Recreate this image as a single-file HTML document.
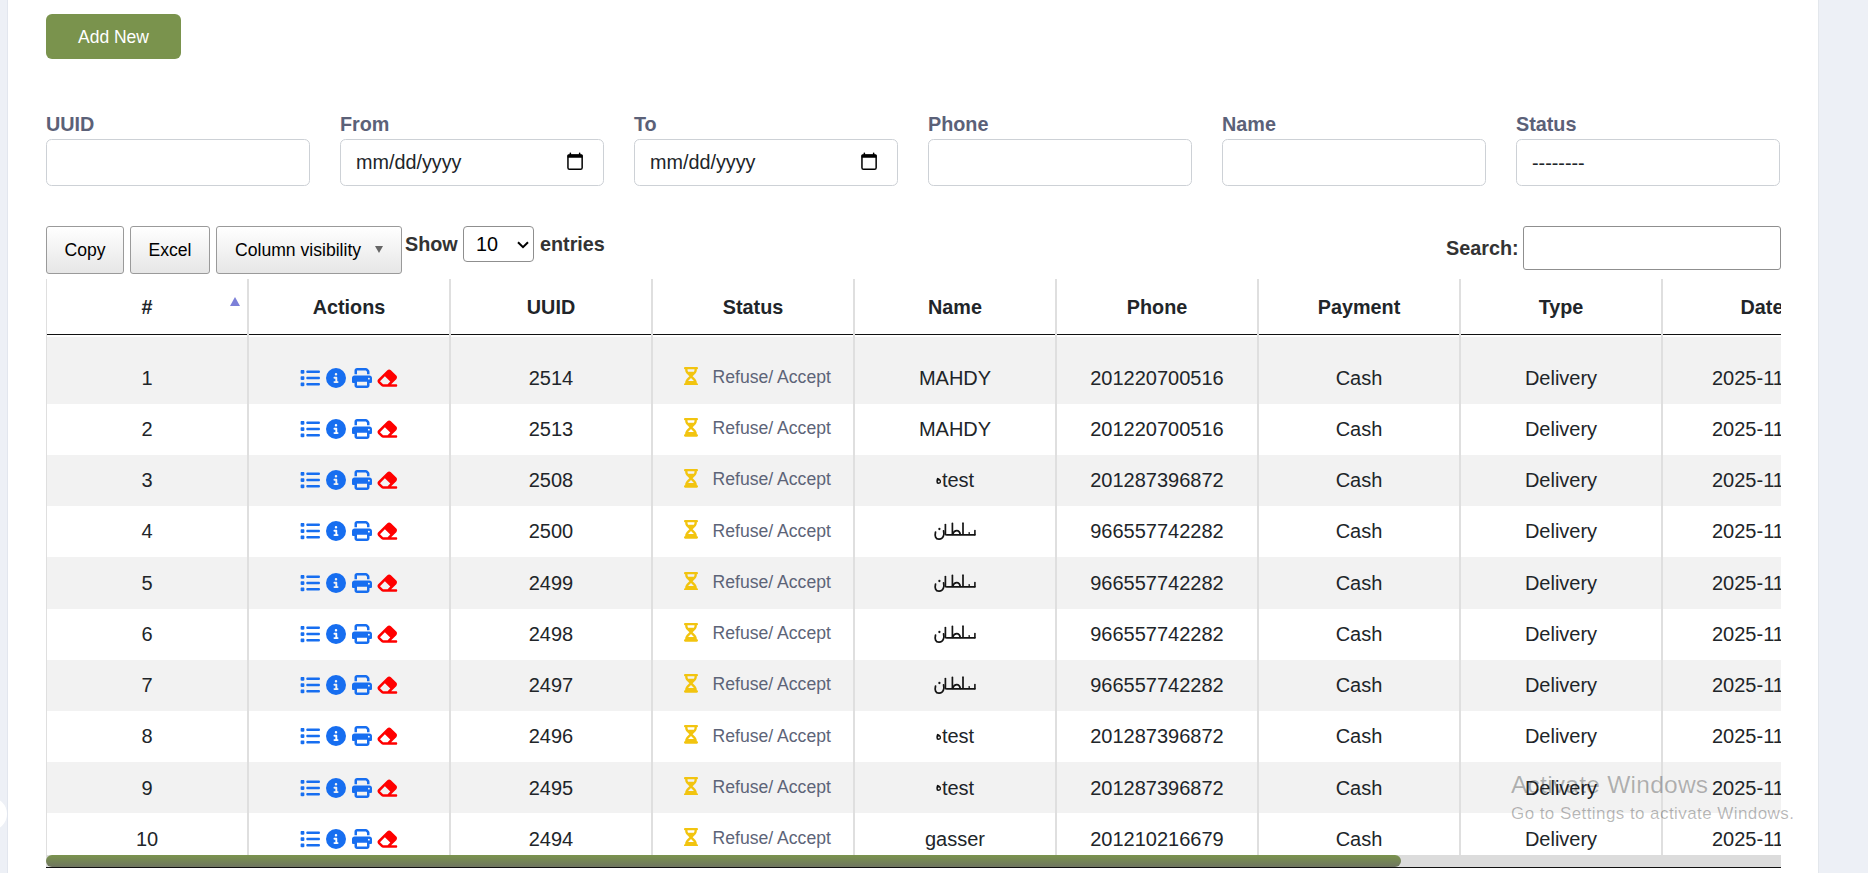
<!DOCTYPE html>
<html><head><meta charset="utf-8"><style>
*{box-sizing:border-box;margin:0;padding:0}
html,body{width:1868px;height:873px;overflow:hidden;background:#fff;font-family:"Liberation Sans",sans-serif;color:#212529}
.a{position:absolute}
.lstrip{position:absolute;left:0;top:0;width:8px;height:873px;background:#edf0f6;border-right:1px solid #e2e6ee}
.blob{position:absolute;left:-28px;top:797px;width:35px;height:34px;border-radius:50%;background:#fff}
.rstrip{position:absolute;left:1818px;top:0;width:50px;height:873px;background:#edf0f6;border-left:1px solid #e3e7ec}
.btn-add{position:absolute;left:46px;top:14px;width:135px;height:45px;background:#7a934d;border-radius:6px;color:#fff;font-size:17.5px;line-height:46.6px;text-align:center}
.lbl{position:absolute;top:112px;font-size:19.8px;font-weight:bold;color:#5b6178;line-height:24px}
.inp{position:absolute;top:139px;width:264px;height:47px;border:1px solid #cdd1d6;border-radius:5.5px;background:#fff}
.inp .t{position:absolute;left:15px;top:10px;font-size:19.8px;line-height:24px;color:#212529}
.cal{position:absolute;left:226px;top:12px}
.dbtn{position:absolute;top:226px;height:48px;border:1px solid #9a9a9a;border-radius:3px;background:linear-gradient(#ffffff,#e6e6e6);font-size:17.6px;line-height:46px;color:#000;text-align:center}
.bold{font-weight:bold;color:#333;font-size:19.8px;line-height:24px}
.sel{position:absolute;left:463px;top:226px;width:71px;height:36px;border:1px solid #8f8f8f;border-radius:4px;background:#fff}
.srch{position:absolute;left:1523px;top:226px;width:258px;height:44px;border:1px solid #8f8f8f;border-radius:3px;background:#fff}
.clip{position:absolute;left:46px;top:279px;width:1735px;height:594px;overflow:hidden}
.th{position:absolute;top:0;height:55px;width:202px;text-align:center;font-weight:bold;font-size:19.8px;line-height:56px;color:#212529}
.vl{position:absolute;top:0;width:2px;height:576px;background:#dfdfdf}
.row{position:absolute;left:0;width:1900px}
.g{background:#f2f2f2}
.td{position:absolute;width:202px;text-align:center;font-size:20px;line-height:24px;color:#212529;white-space:nowrap}
.st{position:absolute;font-size:17.6px;line-height:20px;color:#5d6478;white-space:nowrap}
.icons{position:absolute;height:20px}
.icons svg{position:absolute;top:0}
.wm1{position:absolute;left:1511px;top:770.5px;font-size:24.5px;line-height:normal;color:rgba(0,0,0,.28);white-space:nowrap;letter-spacing:0.25px}
.wm2{position:absolute;left:1511px;top:803.8px;font-size:17px;line-height:normal;color:rgba(0,0,0,.28);white-space:nowrap;letter-spacing:0.43px}
</style></head><body>
<div class="lstrip"></div><div class="blob"></div><div class="rstrip"></div>
<div class="btn-add">Add New</div>
<div class="lbl" style="left:46px">UUID</div>
<div class="lbl" style="left:340px">From</div>
<div class="lbl" style="left:634px">To</div>
<div class="lbl" style="left:928px">Phone</div>
<div class="lbl" style="left:1222px">Name</div>
<div class="lbl" style="left:1516px">Status</div>
<div class="inp" style="left:46px"></div>
<div class="inp" style="left:340px"><span class="t">mm/dd/yyyy</span><svg class="cal" width="17" height="19" viewBox="0 0 17 19"><rect x="2.6" y="0.4" width="1.5" height="3" rx="0.7" fill="#000"/><rect x="11.9" y="0.4" width="1.5" height="3" rx="0.7" fill="#000"/><rect x="0.95" y="3.05" width="14.2" height="14.3" rx="1.6" fill="none" stroke="#000" stroke-width="1.5"/><rect x="0.4" y="2.4" width="15.3" height="3.4" rx="1" fill="#000"/></svg></div>
<div class="inp" style="left:634px"><span class="t">mm/dd/yyyy</span><svg class="cal" width="17" height="19" viewBox="0 0 17 19"><rect x="2.6" y="0.4" width="1.5" height="3" rx="0.7" fill="#000"/><rect x="11.9" y="0.4" width="1.5" height="3" rx="0.7" fill="#000"/><rect x="0.95" y="3.05" width="14.2" height="14.3" rx="1.6" fill="none" stroke="#000" stroke-width="1.5"/><rect x="0.4" y="2.4" width="15.3" height="3.4" rx="1" fill="#000"/></svg></div>
<div class="inp" style="left:928px"></div>
<div class="inp" style="left:1222px"></div>
<div class="inp" style="left:1516px"><span class="t" style="top:11px">--------</span></div>
<div class="dbtn" style="left:46px;width:78px">Copy</div>
<div class="dbtn" style="left:130px;width:80px">Excel</div>
<div class="dbtn" style="left:216px;width:186px;text-align:left;padding-left:18px">Column visibility<svg class="a" style="left:158px;top:19px" width="8" height="7" viewBox="0 0 8 7"><path d="M0 0H8L4 7z" fill="#666"/></svg></div>
<div class="a bold" style="left:405px;top:232px">Show</div>
<div class="sel"><span class="a" style="left:12px;top:5px;font-size:19.8px;line-height:24px;color:#000">10</span><svg class="a" style="left:53px;top:14px" width="12" height="8" viewBox="0 0 12 8"><path d="M1 1.2L6 6.2 11 1.2" fill="none" stroke="#000" stroke-width="2"/></svg></div>
<div class="a bold" style="left:540px;top:232px">entries</div>
<div class="a bold" style="left:1446px;top:236px">Search:</div>
<div class="srch"></div>
<div class="clip">
<div class="row g" style="top:58.00px;height:66.70px"></div>
<div class="row" style="top:124.70px;height:51.22px"></div>
<div class="row g" style="top:175.92px;height:51.22px"></div>
<div class="row" style="top:227.14px;height:51.22px"></div>
<div class="row g" style="top:278.36px;height:51.22px"></div>
<div class="row" style="top:329.58px;height:51.22px"></div>
<div class="row g" style="top:380.80px;height:51.22px"></div>
<div class="row" style="top:432.02px;height:51.22px"></div>
<div class="row g" style="top:483.24px;height:51.22px"></div>
<div class="row" style="top:534.46px;height:51.22px"></div>
<div class="td" style="left:0;top:86.78px">1</div>
<div class="icons" style="left:254px;top:88.78px"><span class="a" style="left:0"><svg width="20" height="20" viewBox="0 0 512 512"><path fill="#176ef0" d="M40 48C26.7 48 16 58.7 16 72v48c0 13.3 10.7 24 24 24H88c13.3 0 24-10.7 24-24V72c0-13.3-10.7-24-24-24H40zM192 64c-17.7 0-32 14.3-32 32s14.3 32 32 32H480c17.7 0 32-14.3 32-32s-14.3-32-32-32H192zm0 160c-17.7 0-32 14.3-32 32s14.3 32 32 32H480c17.7 0 32-14.3 32-32s-14.3-32-32-32H192zm0 160c-17.7 0-32 14.3-32 32s14.3 32 32 32H480c17.7 0 32-14.3 32-32s-14.3-32-32-32H192zM16 232v48c0 13.3 10.7 24 24 24H88c13.3 0 24-10.7 24-24V232c0-13.3-10.7-24-24-24H40c-13.3 0-24 10.7-24 24zM40 368c-13.3 0-24 10.7-24 24v48c0 13.3 10.7 24 24 24H88c13.3 0 24-10.7 24-24V392c0-13.3-10.7-24-24-24H40z"/></svg></span><span class="a" style="left:26px"><svg width="20" height="20" viewBox="0 0 512 512"><path fill="#176ef0" d="M256 512A256 256 0 1 0 256 0a256 256 0 1 0 0 512zM216 336h24V272H216c-13.3 0-24-10.7-24-24s10.7-24 24-24h48c13.3 0 24 10.7 24 24v88h8c13.3 0 24 10.7 24 24s-10.7 24-24 24H216c-13.3 0-24-10.7-24-24s10.7-24 24-24zm40-208a32 32 0 1 1 0 64 32 32 0 1 1 0-64z"/></svg></span><span class="a" style="left:51.5px"><svg width="20" height="20" viewBox="0 0 512 512"><path fill="#176ef0" d="M128 0C92.7 0 64 28.7 64 64v96h64V64H354.7L384 93.3V160h64V93.3c0-17-6.7-33.3-18.7-45.3L400 18.7C388 6.700 371.7 0 354.7 0H128zM384 352v32 64H128V384 368 352H384zm64 32h32c17.7 0 32-14.3 32-32V256c0-35.3-28.7-64-64-64H64c-35.3 0-64 28.7-64 64v96c0 17.7 14.3 32 32 32H64v64c0 35.3 28.7 64 64 64H384c35.3 0 64-28.7 64-64V384zM432 248a24 24 0 1 1 0 48 24 24 0 1 1 0-48z"/></svg></span><span class="a" style="left:75.5px"><svg width="22.5" height="20" viewBox="0 0 576 512"><path fill="#ff0000" d="M290.7 57.4L57.4 290.7c-25 25-25 65.5 0 90.5l80 80c12 12 28.3 18.7 45.3 18.7H288h9.4H512c17.7 0 32-14.3 32-32s-14.3-32-32-32H387.9L518.6 285.3c25-25 25-65.5 0-90.5L381.3 57.4c-25-25-65.5-25-90.5 0zM297.4 416H288l-105.4 0-80-80L227.3 211.3 364.7 348.7 297.4 416z"/></svg></span></div>
<div class="td" style="left:404px;top:86.78px">2514</div>
<div class="a" style="left:638px;top:87.78px"><svg width="14" height="18.7" viewBox="0 0 384 512"><path fill="#f2c40f" d="M32 0C14.3 0 0 14.3 0 32S14.3 64 32 64V75c0 42.4 16.9 83.1 46.9 113.1L146.7 256 78.9 323.9C48.9 353.9 32 394.6 32 437v11c-17.7 0-32 14.3-32 32s14.3 32 32 32H64 320h32c17.7 0 32-14.300 32-32s-14.3-32-32-32V437c0-42.4-16.9-83.1-46.9-113.1L237.3 256l67.9-67.9c30-30 46.9-70.7 46.9-113.1V64c17.7 0 32-14.3 32-32s-14.3-32-32-32H320 64 32zM96 75V64H288V75c0 19-5.6 37.4-16 53H112c-10.3-15.6-16-34-16-53zm16 309c3.5-5.3 7.6-10.3 12.1-14.9L192 301.3l67.9 67.9c4.6 4.6 8.6 9.6 12.1 14.9H112z"/></svg></div>
<div class="st" style="left:666.5px;top:87.98px">Refuse/ Accept</div>
<div class="td" style="left:808px;top:86.78px">MAHDY</div>
<div class="td" style="left:1010px;top:86.78px">201220700516</div>
<div class="td" style="left:1212px;top:86.78px">Cash</div>
<div class="td" style="left:1414px;top:86.78px">Delivery</div>
<div class="td" style="left:1666px;top:86.78px;text-align:left">2025-11-10 12:00</div>
<div class="td" style="left:0;top:138.00px">2</div>
<div class="icons" style="left:254px;top:140.00px"><span class="a" style="left:0"><svg width="20" height="20" viewBox="0 0 512 512"><path fill="#176ef0" d="M40 48C26.7 48 16 58.7 16 72v48c0 13.3 10.7 24 24 24H88c13.3 0 24-10.7 24-24V72c0-13.3-10.7-24-24-24H40zM192 64c-17.7 0-32 14.3-32 32s14.3 32 32 32H480c17.7 0 32-14.3 32-32s-14.3-32-32-32H192zm0 160c-17.7 0-32 14.3-32 32s14.3 32 32 32H480c17.7 0 32-14.3 32-32s-14.3-32-32-32H192zm0 160c-17.7 0-32 14.3-32 32s14.3 32 32 32H480c17.7 0 32-14.3 32-32s-14.3-32-32-32H192zM16 232v48c0 13.3 10.7 24 24 24H88c13.3 0 24-10.7 24-24V232c0-13.3-10.7-24-24-24H40c-13.3 0-24 10.7-24 24zM40 368c-13.3 0-24 10.7-24 24v48c0 13.3 10.7 24 24 24H88c13.3 0 24-10.7 24-24V392c0-13.3-10.7-24-24-24H40z"/></svg></span><span class="a" style="left:26px"><svg width="20" height="20" viewBox="0 0 512 512"><path fill="#176ef0" d="M256 512A256 256 0 1 0 256 0a256 256 0 1 0 0 512zM216 336h24V272H216c-13.3 0-24-10.7-24-24s10.7-24 24-24h48c13.3 0 24 10.7 24 24v88h8c13.3 0 24 10.7 24 24s-10.7 24-24 24H216c-13.3 0-24-10.7-24-24s10.7-24 24-24zm40-208a32 32 0 1 1 0 64 32 32 0 1 1 0-64z"/></svg></span><span class="a" style="left:51.5px"><svg width="20" height="20" viewBox="0 0 512 512"><path fill="#176ef0" d="M128 0C92.7 0 64 28.7 64 64v96h64V64H354.7L384 93.3V160h64V93.3c0-17-6.7-33.3-18.7-45.3L400 18.7C388 6.700 371.7 0 354.7 0H128zM384 352v32 64H128V384 368 352H384zm64 32h32c17.7 0 32-14.3 32-32V256c0-35.3-28.7-64-64-64H64c-35.3 0-64 28.7-64 64v96c0 17.7 14.3 32 32 32H64v64c0 35.3 28.7 64 64 64H384c35.3 0 64-28.7 64-64V384zM432 248a24 24 0 1 1 0 48 24 24 0 1 1 0-48z"/></svg></span><span class="a" style="left:75.5px"><svg width="22.5" height="20" viewBox="0 0 576 512"><path fill="#ff0000" d="M290.7 57.4L57.4 290.7c-25 25-25 65.5 0 90.5l80 80c12 12 28.3 18.7 45.3 18.7H288h9.4H512c17.7 0 32-14.3 32-32s-14.3-32-32-32H387.9L518.6 285.3c25-25 25-65.5 0-90.5L381.3 57.4c-25-25-65.5-25-90.5 0zM297.4 416H288l-105.4 0-80-80L227.3 211.3 364.7 348.7 297.4 416z"/></svg></span></div>
<div class="td" style="left:404px;top:138.00px">2513</div>
<div class="a" style="left:638px;top:139.00px"><svg width="14" height="18.7" viewBox="0 0 384 512"><path fill="#f2c40f" d="M32 0C14.3 0 0 14.3 0 32S14.3 64 32 64V75c0 42.4 16.9 83.1 46.9 113.1L146.7 256 78.9 323.9C48.9 353.9 32 394.6 32 437v11c-17.7 0-32 14.3-32 32s14.3 32 32 32H64 320h32c17.7 0 32-14.300 32-32s-14.3-32-32-32V437c0-42.4-16.9-83.1-46.9-113.1L237.3 256l67.9-67.9c30-30 46.9-70.7 46.9-113.1V64c17.7 0 32-14.3 32-32s-14.3-32-32-32H320 64 32zM96 75V64H288V75c0 19-5.6 37.4-16 53H112c-10.3-15.6-16-34-16-53zm16 309c3.5-5.3 7.6-10.3 12.1-14.9L192 301.3l67.9 67.9c4.6 4.6 8.6 9.6 12.1 14.9H112z"/></svg></div>
<div class="st" style="left:666.5px;top:139.20px">Refuse/ Accept</div>
<div class="td" style="left:808px;top:138.00px">MAHDY</div>
<div class="td" style="left:1010px;top:138.00px">201220700516</div>
<div class="td" style="left:1212px;top:138.00px">Cash</div>
<div class="td" style="left:1414px;top:138.00px">Delivery</div>
<div class="td" style="left:1666px;top:138.00px;text-align:left">2025-11-10 12:00</div>
<div class="td" style="left:0;top:189.22px">3</div>
<div class="icons" style="left:254px;top:191.22px"><span class="a" style="left:0"><svg width="20" height="20" viewBox="0 0 512 512"><path fill="#176ef0" d="M40 48C26.7 48 16 58.7 16 72v48c0 13.3 10.7 24 24 24H88c13.3 0 24-10.7 24-24V72c0-13.3-10.7-24-24-24H40zM192 64c-17.7 0-32 14.3-32 32s14.3 32 32 32H480c17.7 0 32-14.3 32-32s-14.3-32-32-32H192zm0 160c-17.7 0-32 14.3-32 32s14.3 32 32 32H480c17.7 0 32-14.3 32-32s-14.3-32-32-32H192zm0 160c-17.7 0-32 14.3-32 32s14.3 32 32 32H480c17.7 0 32-14.3 32-32s-14.3-32-32-32H192zM16 232v48c0 13.3 10.7 24 24 24H88c13.3 0 24-10.7 24-24V232c0-13.3-10.7-24-24-24H40c-13.3 0-24 10.7-24 24zM40 368c-13.3 0-24 10.7-24 24v48c0 13.3 10.7 24 24 24H88c13.3 0 24-10.7 24-24V392c0-13.3-10.7-24-24-24H40z"/></svg></span><span class="a" style="left:26px"><svg width="20" height="20" viewBox="0 0 512 512"><path fill="#176ef0" d="M256 512A256 256 0 1 0 256 0a256 256 0 1 0 0 512zM216 336h24V272H216c-13.3 0-24-10.7-24-24s10.7-24 24-24h48c13.3 0 24 10.7 24 24v88h8c13.3 0 24 10.7 24 24s-10.7 24-24 24H216c-13.3 0-24-10.7-24-24s10.7-24 24-24zm40-208a32 32 0 1 1 0 64 32 32 0 1 1 0-64z"/></svg></span><span class="a" style="left:51.5px"><svg width="20" height="20" viewBox="0 0 512 512"><path fill="#176ef0" d="M128 0C92.7 0 64 28.7 64 64v96h64V64H354.7L384 93.3V160h64V93.3c0-17-6.7-33.3-18.7-45.3L400 18.7C388 6.700 371.7 0 354.7 0H128zM384 352v32 64H128V384 368 352H384zm64 32h32c17.7 0 32-14.3 32-32V256c0-35.3-28.7-64-64-64H64c-35.3 0-64 28.7-64 64v96c0 17.7 14.3 32 32 32H64v64c0 35.3 28.7 64 64 64H384c35.3 0 64-28.7 64-64V384zM432 248a24 24 0 1 1 0 48 24 24 0 1 1 0-48z"/></svg></span><span class="a" style="left:75.5px"><svg width="22.5" height="20" viewBox="0 0 576 512"><path fill="#ff0000" d="M290.7 57.4L57.4 290.7c-25 25-25 65.5 0 90.5l80 80c12 12 28.3 18.7 45.3 18.7H288h9.4H512c17.7 0 32-14.3 32-32s-14.3-32-32-32H387.9L518.6 285.3c25-25 25-65.5 0-90.5L381.3 57.4c-25-25-65.5-25-90.5 0zM297.4 416H288l-105.4 0-80-80L227.3 211.3 364.7 348.7 297.4 416z"/></svg></span></div>
<div class="td" style="left:404px;top:189.22px">2508</div>
<div class="a" style="left:638px;top:190.22px"><svg width="14" height="18.7" viewBox="0 0 384 512"><path fill="#f2c40f" d="M32 0C14.3 0 0 14.3 0 32S14.3 64 32 64V75c0 42.4 16.9 83.1 46.9 113.1L146.7 256 78.9 323.9C48.9 353.9 32 394.6 32 437v11c-17.7 0-32 14.3-32 32s14.3 32 32 32H64 320h32c17.7 0 32-14.300 32-32s-14.3-32-32-32V437c0-42.4-16.9-83.1-46.9-113.1L237.3 256l67.9-67.9c30-30 46.9-70.7 46.9-113.1V64c17.7 0 32-14.3 32-32s-14.3-32-32-32H320 64 32zM96 75V64H288V75c0 19-5.6 37.4-16 53H112c-10.3-15.6-16-34-16-53zm16 309c3.5-5.3 7.6-10.3 12.1-14.9L192 301.3l67.9 67.9c4.6 4.6 8.6 9.6 12.1 14.9H112z"/></svg></div>
<div class="st" style="left:666.5px;top:190.42px">Refuse/ Accept</div>
<div class="td" style="left:808px;top:189.22px"><span style="display:inline-block;position:relative;padding-left:6px"><svg style="position:absolute;left:0;top:8.6px" width="6" height="8" viewBox="0 0 6 8"><path d="M1.2 0.8C3.4 1.4 5.4 2.8 5 5 4.6 7 2.2 7.4 0.8 6.6 0 4.8 0.4 2.4 1.2 0.8z" fill="#111"/><circle cx="2.8" cy="4.4" r="1" fill="#f2f2f2"/></svg>test</span></div>
<div class="td" style="left:1010px;top:189.22px">201287396872</div>
<div class="td" style="left:1212px;top:189.22px">Cash</div>
<div class="td" style="left:1414px;top:189.22px">Delivery</div>
<div class="td" style="left:1666px;top:189.22px;text-align:left">2025-11-10 12:00</div>
<div class="td" style="left:0;top:240.44px">4</div>
<div class="icons" style="left:254px;top:242.44px"><span class="a" style="left:0"><svg width="20" height="20" viewBox="0 0 512 512"><path fill="#176ef0" d="M40 48C26.7 48 16 58.7 16 72v48c0 13.3 10.7 24 24 24H88c13.3 0 24-10.7 24-24V72c0-13.3-10.7-24-24-24H40zM192 64c-17.7 0-32 14.3-32 32s14.3 32 32 32H480c17.7 0 32-14.3 32-32s-14.3-32-32-32H192zm0 160c-17.7 0-32 14.3-32 32s14.3 32 32 32H480c17.7 0 32-14.3 32-32s-14.3-32-32-32H192zm0 160c-17.7 0-32 14.3-32 32s14.3 32 32 32H480c17.7 0 32-14.3 32-32s-14.3-32-32-32H192zM16 232v48c0 13.3 10.7 24 24 24H88c13.3 0 24-10.7 24-24V232c0-13.3-10.7-24-24-24H40c-13.3 0-24 10.7-24 24zM40 368c-13.3 0-24 10.7-24 24v48c0 13.3 10.7 24 24 24H88c13.3 0 24-10.7 24-24V392c0-13.3-10.7-24-24-24H40z"/></svg></span><span class="a" style="left:26px"><svg width="20" height="20" viewBox="0 0 512 512"><path fill="#176ef0" d="M256 512A256 256 0 1 0 256 0a256 256 0 1 0 0 512zM216 336h24V272H216c-13.3 0-24-10.7-24-24s10.7-24 24-24h48c13.3 0 24 10.7 24 24v88h8c13.3 0 24 10.7 24 24s-10.7 24-24 24H216c-13.3 0-24-10.7-24-24s10.7-24 24-24zm40-208a32 32 0 1 1 0 64 32 32 0 1 1 0-64z"/></svg></span><span class="a" style="left:51.5px"><svg width="20" height="20" viewBox="0 0 512 512"><path fill="#176ef0" d="M128 0C92.7 0 64 28.7 64 64v96h64V64H354.7L384 93.3V160h64V93.3c0-17-6.7-33.3-18.7-45.3L400 18.7C388 6.700 371.7 0 354.7 0H128zM384 352v32 64H128V384 368 352H384zm64 32h32c17.7 0 32-14.3 32-32V256c0-35.3-28.7-64-64-64H64c-35.3 0-64 28.7-64 64v96c0 17.7 14.3 32 32 32H64v64c0 35.3 28.7 64 64 64H384c35.3 0 64-28.7 64-64V384zM432 248a24 24 0 1 1 0 48 24 24 0 1 1 0-48z"/></svg></span><span class="a" style="left:75.5px"><svg width="22.5" height="20" viewBox="0 0 576 512"><path fill="#ff0000" d="M290.7 57.4L57.4 290.7c-25 25-25 65.5 0 90.5l80 80c12 12 28.3 18.7 45.3 18.7H288h9.4H512c17.7 0 32-14.3 32-32s-14.3-32-32-32H387.9L518.6 285.3c25-25 25-65.5 0-90.5L381.3 57.4c-25-25-65.5-25-90.5 0zM297.4 416H288l-105.4 0-80-80L227.3 211.3 364.7 348.7 297.4 416z"/></svg></span></div>
<div class="td" style="left:404px;top:240.44px">2500</div>
<div class="a" style="left:638px;top:241.44px"><svg width="14" height="18.7" viewBox="0 0 384 512"><path fill="#f2c40f" d="M32 0C14.3 0 0 14.3 0 32S14.3 64 32 64V75c0 42.4 16.9 83.1 46.9 113.1L146.7 256 78.9 323.9C48.9 353.9 32 394.6 32 437v11c-17.7 0-32 14.3-32 32s14.3 32 32 32H64 320h32c17.7 0 32-14.300 32-32s-14.3-32-32-32V437c0-42.4-16.9-83.1-46.9-113.1L237.3 256l67.9-67.9c30-30 46.9-70.7 46.9-113.1V64c17.7 0 32-14.3 32-32s-14.3-32-32-32H320 64 32zM96 75V64H288V75c0 19-5.6 37.4-16 53H112c-10.3-15.6-16-34-16-53zm16 309c3.5-5.3 7.6-10.3 12.1-14.9L192 301.3l67.9 67.9c4.6 4.6 8.6 9.6 12.1 14.9H112z"/></svg></div>
<div class="st" style="left:666.5px;top:241.64px">Refuse/ Accept</div>
<div class="a" style="left:882px;top:239.34px"><svg width="50" height="24" viewBox="0 0 50 24"><g fill="none" stroke="#141414" stroke-linecap="round"><path d="M15.6 12.8C16.4 16.4 15.6 21 11.2 21.2 7.4 21.4 6.6 17.8 7.5 14.2" stroke-width="1.75"/><path d="M17.4 6.6V16.6" stroke-width="1.7"/><path d="M18.6 16.8H46.8" stroke-width="1.8"/><path d="M24.4 5.4V16" stroke-width="1.7"/><path d="M24.6 16.2C26.4 11.4 31.4 11.2 32.2 16.4" stroke-width="1.8"/><path d="M35 5.2V16" stroke-width="1.7"/><path d="M41.2 14.6V16.2" stroke-width="1.3"/><path d="M46.9 12.6V16.8" stroke-width="1.6"/></g><circle cx="11.4" cy="11" r="1.15" fill="#141414"/></svg></div>
<div class="td" style="left:1010px;top:240.44px">966557742282</div>
<div class="td" style="left:1212px;top:240.44px">Cash</div>
<div class="td" style="left:1414px;top:240.44px">Delivery</div>
<div class="td" style="left:1666px;top:240.44px;text-align:left">2025-11-10 12:00</div>
<div class="td" style="left:0;top:291.66px">5</div>
<div class="icons" style="left:254px;top:293.66px"><span class="a" style="left:0"><svg width="20" height="20" viewBox="0 0 512 512"><path fill="#176ef0" d="M40 48C26.7 48 16 58.7 16 72v48c0 13.3 10.7 24 24 24H88c13.3 0 24-10.7 24-24V72c0-13.3-10.7-24-24-24H40zM192 64c-17.7 0-32 14.3-32 32s14.3 32 32 32H480c17.7 0 32-14.3 32-32s-14.3-32-32-32H192zm0 160c-17.7 0-32 14.3-32 32s14.3 32 32 32H480c17.7 0 32-14.3 32-32s-14.3-32-32-32H192zm0 160c-17.7 0-32 14.3-32 32s14.3 32 32 32H480c17.7 0 32-14.3 32-32s-14.3-32-32-32H192zM16 232v48c0 13.3 10.7 24 24 24H88c13.3 0 24-10.7 24-24V232c0-13.3-10.7-24-24-24H40c-13.3 0-24 10.7-24 24zM40 368c-13.3 0-24 10.7-24 24v48c0 13.3 10.7 24 24 24H88c13.3 0 24-10.7 24-24V392c0-13.3-10.7-24-24-24H40z"/></svg></span><span class="a" style="left:26px"><svg width="20" height="20" viewBox="0 0 512 512"><path fill="#176ef0" d="M256 512A256 256 0 1 0 256 0a256 256 0 1 0 0 512zM216 336h24V272H216c-13.3 0-24-10.7-24-24s10.7-24 24-24h48c13.3 0 24 10.7 24 24v88h8c13.3 0 24 10.7 24 24s-10.7 24-24 24H216c-13.3 0-24-10.7-24-24s10.7-24 24-24zm40-208a32 32 0 1 1 0 64 32 32 0 1 1 0-64z"/></svg></span><span class="a" style="left:51.5px"><svg width="20" height="20" viewBox="0 0 512 512"><path fill="#176ef0" d="M128 0C92.7 0 64 28.7 64 64v96h64V64H354.7L384 93.3V160h64V93.3c0-17-6.7-33.3-18.7-45.3L400 18.7C388 6.700 371.7 0 354.7 0H128zM384 352v32 64H128V384 368 352H384zm64 32h32c17.7 0 32-14.3 32-32V256c0-35.3-28.7-64-64-64H64c-35.3 0-64 28.7-64 64v96c0 17.7 14.3 32 32 32H64v64c0 35.3 28.7 64 64 64H384c35.3 0 64-28.7 64-64V384zM432 248a24 24 0 1 1 0 48 24 24 0 1 1 0-48z"/></svg></span><span class="a" style="left:75.5px"><svg width="22.5" height="20" viewBox="0 0 576 512"><path fill="#ff0000" d="M290.7 57.4L57.4 290.7c-25 25-25 65.5 0 90.5l80 80c12 12 28.3 18.7 45.3 18.7H288h9.4H512c17.7 0 32-14.3 32-32s-14.3-32-32-32H387.9L518.6 285.3c25-25 25-65.5 0-90.5L381.3 57.4c-25-25-65.5-25-90.5 0zM297.4 416H288l-105.4 0-80-80L227.3 211.3 364.7 348.7 297.4 416z"/></svg></span></div>
<div class="td" style="left:404px;top:291.66px">2499</div>
<div class="a" style="left:638px;top:292.66px"><svg width="14" height="18.7" viewBox="0 0 384 512"><path fill="#f2c40f" d="M32 0C14.3 0 0 14.3 0 32S14.3 64 32 64V75c0 42.4 16.9 83.1 46.9 113.1L146.7 256 78.9 323.9C48.9 353.9 32 394.6 32 437v11c-17.7 0-32 14.3-32 32s14.3 32 32 32H64 320h32c17.7 0 32-14.300 32-32s-14.3-32-32-32V437c0-42.4-16.9-83.1-46.9-113.1L237.3 256l67.9-67.9c30-30 46.9-70.7 46.9-113.1V64c17.7 0 32-14.3 32-32s-14.3-32-32-32H320 64 32zM96 75V64H288V75c0 19-5.6 37.4-16 53H112c-10.3-15.6-16-34-16-53zm16 309c3.5-5.3 7.6-10.3 12.1-14.9L192 301.3l67.9 67.9c4.6 4.6 8.6 9.6 12.1 14.9H112z"/></svg></div>
<div class="st" style="left:666.5px;top:292.86px">Refuse/ Accept</div>
<div class="a" style="left:882px;top:290.56px"><svg width="50" height="24" viewBox="0 0 50 24"><g fill="none" stroke="#141414" stroke-linecap="round"><path d="M15.6 12.8C16.4 16.4 15.6 21 11.2 21.2 7.4 21.4 6.6 17.8 7.5 14.2" stroke-width="1.75"/><path d="M17.4 6.6V16.6" stroke-width="1.7"/><path d="M18.6 16.8H46.8" stroke-width="1.8"/><path d="M24.4 5.4V16" stroke-width="1.7"/><path d="M24.6 16.2C26.4 11.4 31.4 11.2 32.2 16.4" stroke-width="1.8"/><path d="M35 5.2V16" stroke-width="1.7"/><path d="M41.2 14.6V16.2" stroke-width="1.3"/><path d="M46.9 12.6V16.8" stroke-width="1.6"/></g><circle cx="11.4" cy="11" r="1.15" fill="#141414"/></svg></div>
<div class="td" style="left:1010px;top:291.66px">966557742282</div>
<div class="td" style="left:1212px;top:291.66px">Cash</div>
<div class="td" style="left:1414px;top:291.66px">Delivery</div>
<div class="td" style="left:1666px;top:291.66px;text-align:left">2025-11-10 12:00</div>
<div class="td" style="left:0;top:342.88px">6</div>
<div class="icons" style="left:254px;top:344.88px"><span class="a" style="left:0"><svg width="20" height="20" viewBox="0 0 512 512"><path fill="#176ef0" d="M40 48C26.7 48 16 58.7 16 72v48c0 13.3 10.7 24 24 24H88c13.3 0 24-10.7 24-24V72c0-13.3-10.7-24-24-24H40zM192 64c-17.7 0-32 14.3-32 32s14.3 32 32 32H480c17.7 0 32-14.3 32-32s-14.3-32-32-32H192zm0 160c-17.7 0-32 14.3-32 32s14.3 32 32 32H480c17.7 0 32-14.3 32-32s-14.3-32-32-32H192zm0 160c-17.7 0-32 14.3-32 32s14.3 32 32 32H480c17.7 0 32-14.3 32-32s-14.3-32-32-32H192zM16 232v48c0 13.3 10.7 24 24 24H88c13.3 0 24-10.7 24-24V232c0-13.3-10.7-24-24-24H40c-13.3 0-24 10.7-24 24zM40 368c-13.3 0-24 10.7-24 24v48c0 13.3 10.7 24 24 24H88c13.3 0 24-10.7 24-24V392c0-13.3-10.7-24-24-24H40z"/></svg></span><span class="a" style="left:26px"><svg width="20" height="20" viewBox="0 0 512 512"><path fill="#176ef0" d="M256 512A256 256 0 1 0 256 0a256 256 0 1 0 0 512zM216 336h24V272H216c-13.3 0-24-10.7-24-24s10.7-24 24-24h48c13.3 0 24 10.7 24 24v88h8c13.3 0 24 10.7 24 24s-10.7 24-24 24H216c-13.3 0-24-10.7-24-24s10.7-24 24-24zm40-208a32 32 0 1 1 0 64 32 32 0 1 1 0-64z"/></svg></span><span class="a" style="left:51.5px"><svg width="20" height="20" viewBox="0 0 512 512"><path fill="#176ef0" d="M128 0C92.7 0 64 28.7 64 64v96h64V64H354.7L384 93.3V160h64V93.3c0-17-6.7-33.3-18.7-45.3L400 18.7C388 6.700 371.7 0 354.7 0H128zM384 352v32 64H128V384 368 352H384zm64 32h32c17.7 0 32-14.3 32-32V256c0-35.3-28.7-64-64-64H64c-35.3 0-64 28.7-64 64v96c0 17.7 14.3 32 32 32H64v64c0 35.3 28.7 64 64 64H384c35.3 0 64-28.7 64-64V384zM432 248a24 24 0 1 1 0 48 24 24 0 1 1 0-48z"/></svg></span><span class="a" style="left:75.5px"><svg width="22.5" height="20" viewBox="0 0 576 512"><path fill="#ff0000" d="M290.7 57.4L57.4 290.7c-25 25-25 65.5 0 90.5l80 80c12 12 28.3 18.7 45.3 18.7H288h9.4H512c17.7 0 32-14.3 32-32s-14.3-32-32-32H387.9L518.6 285.3c25-25 25-65.5 0-90.5L381.3 57.4c-25-25-65.5-25-90.5 0zM297.4 416H288l-105.4 0-80-80L227.3 211.3 364.7 348.7 297.4 416z"/></svg></span></div>
<div class="td" style="left:404px;top:342.88px">2498</div>
<div class="a" style="left:638px;top:343.88px"><svg width="14" height="18.7" viewBox="0 0 384 512"><path fill="#f2c40f" d="M32 0C14.3 0 0 14.3 0 32S14.3 64 32 64V75c0 42.4 16.9 83.1 46.9 113.1L146.7 256 78.9 323.9C48.9 353.9 32 394.6 32 437v11c-17.7 0-32 14.3-32 32s14.3 32 32 32H64 320h32c17.7 0 32-14.300 32-32s-14.3-32-32-32V437c0-42.4-16.9-83.1-46.9-113.1L237.3 256l67.9-67.9c30-30 46.9-70.7 46.9-113.1V64c17.7 0 32-14.3 32-32s-14.3-32-32-32H320 64 32zM96 75V64H288V75c0 19-5.6 37.4-16 53H112c-10.3-15.6-16-34-16-53zm16 309c3.5-5.3 7.6-10.3 12.1-14.9L192 301.3l67.9 67.9c4.6 4.6 8.6 9.6 12.1 14.9H112z"/></svg></div>
<div class="st" style="left:666.5px;top:344.08px">Refuse/ Accept</div>
<div class="a" style="left:882px;top:341.78px"><svg width="50" height="24" viewBox="0 0 50 24"><g fill="none" stroke="#141414" stroke-linecap="round"><path d="M15.6 12.8C16.4 16.4 15.6 21 11.2 21.2 7.4 21.4 6.6 17.8 7.5 14.2" stroke-width="1.75"/><path d="M17.4 6.6V16.6" stroke-width="1.7"/><path d="M18.6 16.8H46.8" stroke-width="1.8"/><path d="M24.4 5.4V16" stroke-width="1.7"/><path d="M24.6 16.2C26.4 11.4 31.4 11.2 32.2 16.4" stroke-width="1.8"/><path d="M35 5.2V16" stroke-width="1.7"/><path d="M41.2 14.6V16.2" stroke-width="1.3"/><path d="M46.9 12.6V16.8" stroke-width="1.6"/></g><circle cx="11.4" cy="11" r="1.15" fill="#141414"/></svg></div>
<div class="td" style="left:1010px;top:342.88px">966557742282</div>
<div class="td" style="left:1212px;top:342.88px">Cash</div>
<div class="td" style="left:1414px;top:342.88px">Delivery</div>
<div class="td" style="left:1666px;top:342.88px;text-align:left">2025-11-10 12:00</div>
<div class="td" style="left:0;top:394.10px">7</div>
<div class="icons" style="left:254px;top:396.10px"><span class="a" style="left:0"><svg width="20" height="20" viewBox="0 0 512 512"><path fill="#176ef0" d="M40 48C26.7 48 16 58.7 16 72v48c0 13.3 10.7 24 24 24H88c13.3 0 24-10.7 24-24V72c0-13.3-10.7-24-24-24H40zM192 64c-17.7 0-32 14.3-32 32s14.3 32 32 32H480c17.7 0 32-14.3 32-32s-14.3-32-32-32H192zm0 160c-17.7 0-32 14.3-32 32s14.3 32 32 32H480c17.7 0 32-14.3 32-32s-14.3-32-32-32H192zm0 160c-17.7 0-32 14.3-32 32s14.3 32 32 32H480c17.7 0 32-14.3 32-32s-14.3-32-32-32H192zM16 232v48c0 13.3 10.7 24 24 24H88c13.3 0 24-10.7 24-24V232c0-13.3-10.7-24-24-24H40c-13.3 0-24 10.7-24 24zM40 368c-13.3 0-24 10.7-24 24v48c0 13.3 10.7 24 24 24H88c13.3 0 24-10.7 24-24V392c0-13.3-10.7-24-24-24H40z"/></svg></span><span class="a" style="left:26px"><svg width="20" height="20" viewBox="0 0 512 512"><path fill="#176ef0" d="M256 512A256 256 0 1 0 256 0a256 256 0 1 0 0 512zM216 336h24V272H216c-13.3 0-24-10.7-24-24s10.7-24 24-24h48c13.3 0 24 10.7 24 24v88h8c13.3 0 24 10.7 24 24s-10.7 24-24 24H216c-13.3 0-24-10.7-24-24s10.7-24 24-24zm40-208a32 32 0 1 1 0 64 32 32 0 1 1 0-64z"/></svg></span><span class="a" style="left:51.5px"><svg width="20" height="20" viewBox="0 0 512 512"><path fill="#176ef0" d="M128 0C92.7 0 64 28.7 64 64v96h64V64H354.7L384 93.3V160h64V93.3c0-17-6.7-33.3-18.7-45.3L400 18.7C388 6.700 371.7 0 354.7 0H128zM384 352v32 64H128V384 368 352H384zm64 32h32c17.7 0 32-14.3 32-32V256c0-35.3-28.7-64-64-64H64c-35.3 0-64 28.7-64 64v96c0 17.7 14.3 32 32 32H64v64c0 35.3 28.7 64 64 64H384c35.3 0 64-28.7 64-64V384zM432 248a24 24 0 1 1 0 48 24 24 0 1 1 0-48z"/></svg></span><span class="a" style="left:75.5px"><svg width="22.5" height="20" viewBox="0 0 576 512"><path fill="#ff0000" d="M290.7 57.4L57.4 290.7c-25 25-25 65.5 0 90.5l80 80c12 12 28.3 18.7 45.3 18.7H288h9.4H512c17.7 0 32-14.3 32-32s-14.3-32-32-32H387.9L518.6 285.3c25-25 25-65.5 0-90.5L381.3 57.4c-25-25-65.5-25-90.5 0zM297.4 416H288l-105.4 0-80-80L227.3 211.3 364.7 348.7 297.4 416z"/></svg></span></div>
<div class="td" style="left:404px;top:394.10px">2497</div>
<div class="a" style="left:638px;top:395.10px"><svg width="14" height="18.7" viewBox="0 0 384 512"><path fill="#f2c40f" d="M32 0C14.3 0 0 14.3 0 32S14.3 64 32 64V75c0 42.4 16.9 83.1 46.9 113.1L146.7 256 78.9 323.9C48.9 353.9 32 394.6 32 437v11c-17.7 0-32 14.3-32 32s14.3 32 32 32H64 320h32c17.7 0 32-14.300 32-32s-14.3-32-32-32V437c0-42.4-16.9-83.1-46.9-113.1L237.3 256l67.9-67.9c30-30 46.9-70.7 46.9-113.1V64c17.7 0 32-14.3 32-32s-14.3-32-32-32H320 64 32zM96 75V64H288V75c0 19-5.6 37.4-16 53H112c-10.3-15.6-16-34-16-53zm16 309c3.5-5.3 7.6-10.3 12.1-14.9L192 301.3l67.9 67.9c4.6 4.6 8.6 9.6 12.1 14.9H112z"/></svg></div>
<div class="st" style="left:666.5px;top:395.30px">Refuse/ Accept</div>
<div class="a" style="left:882px;top:393.00px"><svg width="50" height="24" viewBox="0 0 50 24"><g fill="none" stroke="#141414" stroke-linecap="round"><path d="M15.6 12.8C16.4 16.4 15.6 21 11.2 21.2 7.4 21.4 6.6 17.8 7.5 14.2" stroke-width="1.75"/><path d="M17.4 6.6V16.6" stroke-width="1.7"/><path d="M18.6 16.8H46.8" stroke-width="1.8"/><path d="M24.4 5.4V16" stroke-width="1.7"/><path d="M24.6 16.2C26.4 11.4 31.4 11.2 32.2 16.4" stroke-width="1.8"/><path d="M35 5.2V16" stroke-width="1.7"/><path d="M41.2 14.6V16.2" stroke-width="1.3"/><path d="M46.9 12.6V16.8" stroke-width="1.6"/></g><circle cx="11.4" cy="11" r="1.15" fill="#141414"/></svg></div>
<div class="td" style="left:1010px;top:394.10px">966557742282</div>
<div class="td" style="left:1212px;top:394.10px">Cash</div>
<div class="td" style="left:1414px;top:394.10px">Delivery</div>
<div class="td" style="left:1666px;top:394.10px;text-align:left">2025-11-10 12:00</div>
<div class="td" style="left:0;top:445.32px">8</div>
<div class="icons" style="left:254px;top:447.32px"><span class="a" style="left:0"><svg width="20" height="20" viewBox="0 0 512 512"><path fill="#176ef0" d="M40 48C26.7 48 16 58.7 16 72v48c0 13.3 10.7 24 24 24H88c13.3 0 24-10.7 24-24V72c0-13.3-10.7-24-24-24H40zM192 64c-17.7 0-32 14.3-32 32s14.3 32 32 32H480c17.7 0 32-14.3 32-32s-14.3-32-32-32H192zm0 160c-17.7 0-32 14.3-32 32s14.3 32 32 32H480c17.7 0 32-14.3 32-32s-14.3-32-32-32H192zm0 160c-17.7 0-32 14.3-32 32s14.3 32 32 32H480c17.7 0 32-14.3 32-32s-14.3-32-32-32H192zM16 232v48c0 13.3 10.7 24 24 24H88c13.3 0 24-10.7 24-24V232c0-13.3-10.7-24-24-24H40c-13.3 0-24 10.7-24 24zM40 368c-13.3 0-24 10.7-24 24v48c0 13.3 10.7 24 24 24H88c13.3 0 24-10.7 24-24V392c0-13.3-10.7-24-24-24H40z"/></svg></span><span class="a" style="left:26px"><svg width="20" height="20" viewBox="0 0 512 512"><path fill="#176ef0" d="M256 512A256 256 0 1 0 256 0a256 256 0 1 0 0 512zM216 336h24V272H216c-13.3 0-24-10.7-24-24s10.7-24 24-24h48c13.3 0 24 10.7 24 24v88h8c13.3 0 24 10.7 24 24s-10.7 24-24 24H216c-13.3 0-24-10.7-24-24s10.7-24 24-24zm40-208a32 32 0 1 1 0 64 32 32 0 1 1 0-64z"/></svg></span><span class="a" style="left:51.5px"><svg width="20" height="20" viewBox="0 0 512 512"><path fill="#176ef0" d="M128 0C92.7 0 64 28.7 64 64v96h64V64H354.7L384 93.3V160h64V93.3c0-17-6.7-33.3-18.7-45.3L400 18.7C388 6.700 371.7 0 354.7 0H128zM384 352v32 64H128V384 368 352H384zm64 32h32c17.7 0 32-14.3 32-32V256c0-35.3-28.7-64-64-64H64c-35.3 0-64 28.7-64 64v96c0 17.7 14.3 32 32 32H64v64c0 35.3 28.7 64 64 64H384c35.3 0 64-28.7 64-64V384zM432 248a24 24 0 1 1 0 48 24 24 0 1 1 0-48z"/></svg></span><span class="a" style="left:75.5px"><svg width="22.5" height="20" viewBox="0 0 576 512"><path fill="#ff0000" d="M290.7 57.4L57.4 290.7c-25 25-25 65.5 0 90.5l80 80c12 12 28.3 18.7 45.3 18.7H288h9.4H512c17.7 0 32-14.3 32-32s-14.3-32-32-32H387.9L518.6 285.3c25-25 25-65.5 0-90.5L381.3 57.4c-25-25-65.5-25-90.5 0zM297.4 416H288l-105.4 0-80-80L227.3 211.3 364.7 348.7 297.4 416z"/></svg></span></div>
<div class="td" style="left:404px;top:445.32px">2496</div>
<div class="a" style="left:638px;top:446.32px"><svg width="14" height="18.7" viewBox="0 0 384 512"><path fill="#f2c40f" d="M32 0C14.3 0 0 14.3 0 32S14.3 64 32 64V75c0 42.4 16.9 83.1 46.9 113.1L146.7 256 78.9 323.9C48.9 353.9 32 394.6 32 437v11c-17.7 0-32 14.3-32 32s14.3 32 32 32H64 320h32c17.7 0 32-14.300 32-32s-14.3-32-32-32V437c0-42.4-16.9-83.1-46.9-113.1L237.3 256l67.9-67.9c30-30 46.9-70.7 46.9-113.1V64c17.7 0 32-14.3 32-32s-14.3-32-32-32H320 64 32zM96 75V64H288V75c0 19-5.6 37.4-16 53H112c-10.3-15.6-16-34-16-53zm16 309c3.5-5.3 7.6-10.3 12.1-14.9L192 301.3l67.9 67.9c4.6 4.6 8.6 9.6 12.1 14.9H112z"/></svg></div>
<div class="st" style="left:666.5px;top:446.52px">Refuse/ Accept</div>
<div class="td" style="left:808px;top:445.32px"><span style="display:inline-block;position:relative;padding-left:6px"><svg style="position:absolute;left:0;top:8.6px" width="6" height="8" viewBox="0 0 6 8"><path d="M1.2 0.8C3.4 1.4 5.4 2.8 5 5 4.6 7 2.2 7.4 0.8 6.6 0 4.8 0.4 2.4 1.2 0.8z" fill="#111"/><circle cx="2.8" cy="4.4" r="1" fill="#f2f2f2"/></svg>test</span></div>
<div class="td" style="left:1010px;top:445.32px">201287396872</div>
<div class="td" style="left:1212px;top:445.32px">Cash</div>
<div class="td" style="left:1414px;top:445.32px">Delivery</div>
<div class="td" style="left:1666px;top:445.32px;text-align:left">2025-11-10 12:00</div>
<div class="td" style="left:0;top:496.54px">9</div>
<div class="icons" style="left:254px;top:498.54px"><span class="a" style="left:0"><svg width="20" height="20" viewBox="0 0 512 512"><path fill="#176ef0" d="M40 48C26.7 48 16 58.7 16 72v48c0 13.3 10.7 24 24 24H88c13.3 0 24-10.7 24-24V72c0-13.3-10.7-24-24-24H40zM192 64c-17.7 0-32 14.3-32 32s14.3 32 32 32H480c17.7 0 32-14.3 32-32s-14.3-32-32-32H192zm0 160c-17.7 0-32 14.3-32 32s14.3 32 32 32H480c17.7 0 32-14.3 32-32s-14.3-32-32-32H192zm0 160c-17.7 0-32 14.3-32 32s14.3 32 32 32H480c17.7 0 32-14.3 32-32s-14.3-32-32-32H192zM16 232v48c0 13.3 10.7 24 24 24H88c13.3 0 24-10.7 24-24V232c0-13.3-10.7-24-24-24H40c-13.3 0-24 10.7-24 24zM40 368c-13.3 0-24 10.7-24 24v48c0 13.3 10.7 24 24 24H88c13.3 0 24-10.7 24-24V392c0-13.3-10.7-24-24-24H40z"/></svg></span><span class="a" style="left:26px"><svg width="20" height="20" viewBox="0 0 512 512"><path fill="#176ef0" d="M256 512A256 256 0 1 0 256 0a256 256 0 1 0 0 512zM216 336h24V272H216c-13.3 0-24-10.7-24-24s10.7-24 24-24h48c13.3 0 24 10.7 24 24v88h8c13.3 0 24 10.7 24 24s-10.7 24-24 24H216c-13.3 0-24-10.7-24-24s10.7-24 24-24zm40-208a32 32 0 1 1 0 64 32 32 0 1 1 0-64z"/></svg></span><span class="a" style="left:51.5px"><svg width="20" height="20" viewBox="0 0 512 512"><path fill="#176ef0" d="M128 0C92.7 0 64 28.7 64 64v96h64V64H354.7L384 93.3V160h64V93.3c0-17-6.7-33.3-18.7-45.3L400 18.7C388 6.700 371.7 0 354.7 0H128zM384 352v32 64H128V384 368 352H384zm64 32h32c17.7 0 32-14.3 32-32V256c0-35.3-28.7-64-64-64H64c-35.3 0-64 28.7-64 64v96c0 17.7 14.3 32 32 32H64v64c0 35.3 28.7 64 64 64H384c35.3 0 64-28.7 64-64V384zM432 248a24 24 0 1 1 0 48 24 24 0 1 1 0-48z"/></svg></span><span class="a" style="left:75.5px"><svg width="22.5" height="20" viewBox="0 0 576 512"><path fill="#ff0000" d="M290.7 57.4L57.4 290.7c-25 25-25 65.5 0 90.5l80 80c12 12 28.3 18.7 45.3 18.7H288h9.4H512c17.7 0 32-14.3 32-32s-14.3-32-32-32H387.9L518.6 285.3c25-25 25-65.5 0-90.5L381.3 57.4c-25-25-65.5-25-90.5 0zM297.4 416H288l-105.4 0-80-80L227.3 211.3 364.7 348.7 297.4 416z"/></svg></span></div>
<div class="td" style="left:404px;top:496.54px">2495</div>
<div class="a" style="left:638px;top:497.54px"><svg width="14" height="18.7" viewBox="0 0 384 512"><path fill="#f2c40f" d="M32 0C14.3 0 0 14.3 0 32S14.3 64 32 64V75c0 42.4 16.9 83.1 46.9 113.1L146.7 256 78.9 323.9C48.9 353.9 32 394.6 32 437v11c-17.7 0-32 14.3-32 32s14.3 32 32 32H64 320h32c17.7 0 32-14.300 32-32s-14.3-32-32-32V437c0-42.4-16.9-83.1-46.9-113.1L237.3 256l67.9-67.9c30-30 46.9-70.7 46.9-113.1V64c17.7 0 32-14.3 32-32s-14.3-32-32-32H320 64 32zM96 75V64H288V75c0 19-5.6 37.4-16 53H112c-10.3-15.6-16-34-16-53zm16 309c3.5-5.3 7.6-10.3 12.1-14.9L192 301.3l67.9 67.9c4.6 4.6 8.6 9.6 12.1 14.9H112z"/></svg></div>
<div class="st" style="left:666.5px;top:497.74px">Refuse/ Accept</div>
<div class="td" style="left:808px;top:496.54px"><span style="display:inline-block;position:relative;padding-left:6px"><svg style="position:absolute;left:0;top:8.6px" width="6" height="8" viewBox="0 0 6 8"><path d="M1.2 0.8C3.4 1.4 5.4 2.8 5 5 4.6 7 2.2 7.4 0.8 6.6 0 4.8 0.4 2.4 1.2 0.8z" fill="#111"/><circle cx="2.8" cy="4.4" r="1" fill="#f2f2f2"/></svg>test</span></div>
<div class="td" style="left:1010px;top:496.54px">201287396872</div>
<div class="td" style="left:1212px;top:496.54px">Cash</div>
<div class="td" style="left:1414px;top:496.54px">Delivery</div>
<div class="td" style="left:1666px;top:496.54px;text-align:left">2025-11-10 12:00</div>
<div class="td" style="left:0;top:547.76px">10</div>
<div class="icons" style="left:254px;top:549.76px"><span class="a" style="left:0"><svg width="20" height="20" viewBox="0 0 512 512"><path fill="#176ef0" d="M40 48C26.7 48 16 58.7 16 72v48c0 13.3 10.7 24 24 24H88c13.3 0 24-10.7 24-24V72c0-13.3-10.7-24-24-24H40zM192 64c-17.7 0-32 14.3-32 32s14.3 32 32 32H480c17.7 0 32-14.3 32-32s-14.3-32-32-32H192zm0 160c-17.7 0-32 14.3-32 32s14.3 32 32 32H480c17.7 0 32-14.3 32-32s-14.3-32-32-32H192zm0 160c-17.7 0-32 14.3-32 32s14.3 32 32 32H480c17.7 0 32-14.3 32-32s-14.3-32-32-32H192zM16 232v48c0 13.3 10.7 24 24 24H88c13.3 0 24-10.7 24-24V232c0-13.3-10.7-24-24-24H40c-13.3 0-24 10.7-24 24zM40 368c-13.3 0-24 10.7-24 24v48c0 13.3 10.7 24 24 24H88c13.3 0 24-10.7 24-24V392c0-13.3-10.7-24-24-24H40z"/></svg></span><span class="a" style="left:26px"><svg width="20" height="20" viewBox="0 0 512 512"><path fill="#176ef0" d="M256 512A256 256 0 1 0 256 0a256 256 0 1 0 0 512zM216 336h24V272H216c-13.3 0-24-10.7-24-24s10.7-24 24-24h48c13.3 0 24 10.7 24 24v88h8c13.3 0 24 10.7 24 24s-10.7 24-24 24H216c-13.3 0-24-10.7-24-24s10.7-24 24-24zm40-208a32 32 0 1 1 0 64 32 32 0 1 1 0-64z"/></svg></span><span class="a" style="left:51.5px"><svg width="20" height="20" viewBox="0 0 512 512"><path fill="#176ef0" d="M128 0C92.7 0 64 28.7 64 64v96h64V64H354.7L384 93.3V160h64V93.3c0-17-6.7-33.3-18.7-45.3L400 18.7C388 6.700 371.7 0 354.7 0H128zM384 352v32 64H128V384 368 352H384zm64 32h32c17.7 0 32-14.3 32-32V256c0-35.3-28.7-64-64-64H64c-35.3 0-64 28.7-64 64v96c0 17.7 14.3 32 32 32H64v64c0 35.3 28.7 64 64 64H384c35.3 0 64-28.7 64-64V384zM432 248a24 24 0 1 1 0 48 24 24 0 1 1 0-48z"/></svg></span><span class="a" style="left:75.5px"><svg width="22.5" height="20" viewBox="0 0 576 512"><path fill="#ff0000" d="M290.7 57.4L57.4 290.7c-25 25-25 65.5 0 90.5l80 80c12 12 28.3 18.7 45.3 18.7H288h9.4H512c17.7 0 32-14.3 32-32s-14.3-32-32-32H387.9L518.6 285.3c25-25 25-65.5 0-90.5L381.3 57.4c-25-25-65.5-25-90.5 0zM297.4 416H288l-105.4 0-80-80L227.3 211.3 364.7 348.7 297.4 416z"/></svg></span></div>
<div class="td" style="left:404px;top:547.76px">2494</div>
<div class="a" style="left:638px;top:548.76px"><svg width="14" height="18.7" viewBox="0 0 384 512"><path fill="#f2c40f" d="M32 0C14.3 0 0 14.3 0 32S14.3 64 32 64V75c0 42.4 16.9 83.1 46.9 113.1L146.7 256 78.9 323.9C48.9 353.9 32 394.6 32 437v11c-17.7 0-32 14.3-32 32s14.3 32 32 32H64 320h32c17.7 0 32-14.300 32-32s-14.3-32-32-32V437c0-42.4-16.9-83.1-46.9-113.1L237.3 256l67.9-67.9c30-30 46.9-70.7 46.9-113.1V64c17.7 0 32-14.3 32-32s-14.3-32-32-32H320 64 32zM96 75V64H288V75c0 19-5.6 37.4-16 53H112c-10.3-15.6-16-34-16-53zm16 309c3.5-5.3 7.6-10.3 12.1-14.9L192 301.3l67.9 67.9c4.6 4.6 8.6 9.6 12.1 14.9H112z"/></svg></div>
<div class="st" style="left:666.5px;top:548.96px">Refuse/ Accept</div>
<div class="td" style="left:808px;top:547.76px">gasser</div>
<div class="td" style="left:1010px;top:547.76px">201210216679</div>
<div class="td" style="left:1212px;top:547.76px">Cash</div>
<div class="td" style="left:1414px;top:547.76px">Delivery</div>
<div class="td" style="left:1666px;top:547.76px;text-align:left">2025-11-10 12:00</div>
<div class="a" style="left:0;top:0;width:1735px;height:55px;background:#fff"></div>
<div class="th" style="left:0px">#</div>
<div class="th" style="left:202px">Actions</div>
<div class="th" style="left:404px">UUID</div>
<div class="th" style="left:606px">Status</div>
<div class="th" style="left:808px">Name</div>
<div class="th" style="left:1010px">Phone</div>
<div class="th" style="left:1212px">Payment</div>
<div class="th" style="left:1414px">Type</div>
<div class="th" style="left:1616px;width:200px">Date</div>
<svg class="a" style="left:184px;top:18px" width="10" height="9" viewBox="0 0 10 9"><path d="M5 0L10 9H0z" fill="#7c80d8"/></svg>
<div class="a" style="left:0;top:55px;width:1735px;height:1px;background:#111"></div>
<div class="vl" style="left:0;width:1px"></div>
<div class="vl" style="left:201px"></div>
<div class="vl" style="left:403px"></div>
<div class="vl" style="left:605px"></div>
<div class="vl" style="left:807px"></div>
<div class="vl" style="left:1009px"></div>
<div class="vl" style="left:1211px"></div>
<div class="vl" style="left:1413px"></div>
<div class="vl" style="left:1615px"></div>
<div class="a" style="left:0;top:576px;width:1735px;height:12px;background:#dcdcdc"></div>
<div class="a" style="left:0;top:576px;width:1355px;height:12px;border-radius:6px;background:linear-gradient(#7a934d,#6f7560)"></div>
<div class="a" style="left:0;top:588px;width:1735px;height:1px;background:#111"></div>
</div>
<div class="wm1">Activate Windows</div><div class="wm2">Go to Settings to activate Windows.</div>
</body></html>
